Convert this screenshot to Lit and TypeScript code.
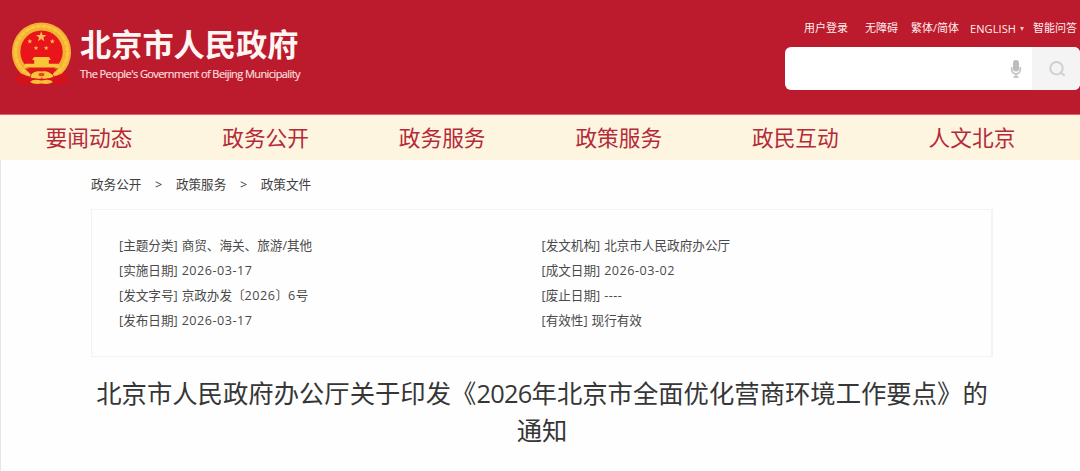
import { css, html, LitElement, svg } from 'lit';
import { customElement, property } from 'lit/decorators.js';

const navItems = ['要闻动态', '政务公开', '政务服务', '政策服务', '政民互动', '人文北京'];
const crumbs = ['政务公开', '政策服务', '政策文件'];

const leftMeta = [
  ['主题分类', '商贸、海关、旅游/其他'],
  ['实施日期', '2026-03-17'],
  ['发文字号', '京政办发〔2026〕6号'],
  ['发布日期', '2026-03-17']
];
const rightMeta = [
  ['发文机构', '北京市人民政府办公厅'],
  ['成文日期', '2026-03-02'],
  ['废止日期', '----'],
  ['有效性', '现行有效']
];

const star = (x: number, y: number, r: number) => {
  const points = Array.from({ length: 10 }, (_, i) => {
    const radius = i % 2 ? r * 0.42 : r;
    const angle = (i * Math.PI) / 5 - Math.PI / 2;
    return `${(x + radius * Math.cos(angle)).toFixed(2)},${(y + radius * Math.sin(angle)).toFixed(2)}`;
  });
  return svg`<polygon fill="#fcbf55" points=${points.join(' ')} />`;
};

@customElement('gov-emblem')
export class GovEmblem extends LitElement {
  static override styles = css`
    :host,
    svg {
      display: block;
    }
  `;

  override render() {
    return html`
      <svg width="62" height="66" viewBox="0 0 62 66">
        <path d="M7 49L54 49L58 59Q50 65 41 62L30.500 64L20 62Q11 65 4 59Z" fill="#d2121d" />
        <path d="M10 51.500A29.600 29.600 0 1 1 51 51.500L45 54L38 47H23L16 54Z" fill="#f3b033" />
        <circle cx="30.5" cy="30" r="26" fill="none" stroke="#fbc640" stroke-width="3" stroke-dasharray="5 0.8" />
        <circle cx="30.5" cy="29.700" r="21.200" fill="#e9151a" />
        ${star(30.2, 14.8, 5.4)} ${star(18.8, 19.3, 2.6)} ${star(41.3, 19.3, 2.6)} ${star(25, 26, 2.5)}
        ${star(35.2, 26, 2.5)}
        <path d="M23 35h15l1.800 3h-2v3.800h9.700l1 3.700H13l1-3.700h9.200v-3.800h-2z" fill="#f9c63a" />
        <path d="M14 46.500h33l-5 5Q36 47.500 30.500 49Q25 47.500 19 51.500z" fill="#dc1a1b" />
        <path d="M20 53q3-4.500 10.500-3.500Q38 48.500 41 53l-4 3.500q-6.500-2-13 0z" fill="#f9c43a" />
        <ellipse cx="30.5" cy="52.500" rx="3" ry="1.800" fill="#e0491f" />
        <path d="M14 54q8 3.500 16.500 2.500Q39 57.500 47 54l-6 5H20z" fill="#d8171c" />
        <path d="M19 60q3-3.500 11.500-1.500Q39 56.500 42 60q-4 2.800-11.500 1.500Q23 62.800 19 60z" fill="#f7bd35" />
      </svg>
    `;
  }
}

@customElement('meta-list')
export class MetaList extends LitElement {
  static override styles = css`
    :host {
      display: flex;
      flex-direction: column;
      font-size: 12.6px;
      line-height: 25.1px;
      color: #4a4a4a;
      white-space: nowrap;
    }

    .row {
      display: flex;
      gap: 4px;
    }

    .num {
      letter-spacing: 0.5px;
    }
  `;

  @property({ attribute: false })
  rows: string[][] = [];

  // digits and dashes are set a little looser than the Chinese text
  private renderValue(value: string) {
    return value.split(/([\d-]+)/).map(part => (/^[\d-]/.test(part) ? html`<span class="num">${part}</span>` : part));
  }

  override render() {
    return this.rows.map(
      ([label, value]) =>
        html`<div class="row"><span>[${label}]</span><span>${this.renderValue(value)}</span></div>`
    );
  }
}

@customElement('app-root')
export class AppRoot extends LitElement {
  static override styles = css`
    :host {
      display: flex;
      flex-direction: column;
      box-sizing: border-box;
      height: 471px;
      overflow: hidden;
      background: #fefefe;
      font-family: 'Open Sans', 'Noto Sans CJK SC', sans-serif;
    }

    .header {
      display: flex;
      justify-content: space-between;
      box-sizing: border-box;
      height: 115px;
      flex: none;
      padding-left: 11px;
      background: #bc1a2d;
      border-bottom: 1px solid #d9686a;
      color: #fff;
    }

    .brand {
      display: flex;
      gap: 7px;
      padding-top: 22px;
    }

    .names {
      display: flex;
      flex-direction: column;
      padding-top: 4px;
      white-space: nowrap;
    }

    .name {
      font-size: 31.2px;
      line-height: 37px;
      font-weight: 700;
      color: #fff5f3;
    }

    .name-en {
      padding-top: 3px;
      font-size: 11px;
      line-height: 16px;
      font-weight: 400;
      letter-spacing: -0.58px;
      color: #fbdcd9;
      -webkit-text-stroke: 0.2px #fbdcd9;
    }

    .tools {
      display: flex;
      flex-direction: column;
      width: 295px;
      padding-top: 20px;
    }

    .links {
      display: flex;
      align-items: flex-start;
      height: 27px;
      padding-left: 19px;
      font-size: 11px;
      line-height: 16px;
      white-space: nowrap;
      color: #fff0ed;
    }

    .link {
      flex: none;
    }

    .login {
      width: 61px;
    }

    .access {
      width: 46px;
    }

    .script {
      width: 59px;
    }

    .english {
      display: flex;
      align-items: center;
      gap: 4px;
      width: 63px;
      letter-spacing: 0.1px;
      line-height: 17px;
    }

    .caret {
      border: 2.5px solid transparent;
      border-top: 4px solid #f4c5c4;
      border-bottom: 0;
    }

    .search {
      display: flex;
      height: 43px;
      overflow: hidden;
      border-radius: 6px;
      background: #fff;
    }

    .field {
      display: flex;
      flex: 1;
      align-items: center;
      justify-content: flex-end;
      padding-right: 10px;
    }

    .submit {
      display: flex;
      align-items: center;
      justify-content: center;
      box-sizing: border-box;
      width: 48px;
      padding-left: 2px;
      background: #f4f4f4;
    }

    .nav {
      display: grid;
      grid-template-columns: repeat(6, 176.6px);
      flex: none;
      height: 45px;
      padding-left: 45.6px;
      background: #fef5e0;
      color: #b52a38;
      font-size: 21.7px;
      line-height: 46px;
      white-space: nowrap;
    }

    .page {
      display: flex;
      flex: 1;
      flex-direction: column;
      padding-left: 91px;
      box-shadow: inset 1px 0 #e6e6e8;
    }

    .crumbs {
      display: flex;
      height: 49px;
      font-size: 12.6px;
      line-height: 49px;
      color: #3f3f3f;
    }

    .sep {
      width: 34.5px;
      text-align: center;
    }

    .card {
      display: grid;
      grid-template-columns: 422.5px 1fr;
      box-sizing: border-box;
      width: 902px;
      height: 148px;
      padding: 23px 27px;
      border: 1px solid #f4f3ef;
      border-right-width: 2px;
    }

    .title {
      width: 902px;
      margin: 0;
      padding-top: 18px;
      font-size: 25.35px;
      line-height: 36.5px;
      font-weight: 400;
      text-align: center;
      white-space: nowrap;
      color: #363636;
    }

    .year {
      letter-spacing: -0.7px;
    }
  `;

  override render() {
    return html`
      <header class="header">
        <div class="brand">
          <gov-emblem></gov-emblem>
          <div class="names">
            <span class="name">北京市人民政府</span>
            <span class="name-en">The People's Government of Beijing Municipality</span>
          </div>
        </div>
        <div class="tools">
          <div class="links">
            <span class="link login">用户登录</span>
            <span class="link access">无障碍</span>
            <span class="link script">繁体/简体</span>
            <span class="link english">ENGLISH<i class="caret"></i></span>
            <span class="link">智能问答</span>
          </div>
          <div class="search">
            <div class="field">
              <svg width="12" height="20" viewBox="0 0 12 20">
                <rect x="3" y="1" width="6" height="11.5" rx="3" fill="#bdbdbd" />
                <path d="M1.700 8v2.500a4.300 4.300 0 0 0 8.600 0V8M6 15v3M3.500 18.200h5" fill="none" stroke="#c6c6c6" stroke-width="1.8" />
              </svg>
            </div>
            <div class="submit">
              <svg width="18" height="18" viewBox="0 0 18 18" fill="none" stroke="#cfcfcf" stroke-width="1.9">
                <circle cx="8.5" cy="8.2" r="6.2" />
                <path d="M12.8 12.5l4 3.4" />
              </svg>
            </div>
          </div>
        </div>
      </header>
      <nav class="nav">${navItems.map(item => html`<span>${item}</span>`)}</nav>
      <main class="page">
        <div class="crumbs">
          ${crumbs.map((crumb, i) => html`${i ? html`<span class="sep">&gt;</span>` : ''}<span>${crumb}</span>`)}
        </div>
        <section class="card">
          <meta-list .rows=${leftMeta}></meta-list>
          <meta-list .rows=${rightMeta}></meta-list>
        </section>
        <h1 class="title">
          北京市人民政府办公厅关于印发《<span class="year">2026</span>年北京市全面优化营商环境工作要点》的<br />通知
        </h1>
      </main>
    `;
  }
}
